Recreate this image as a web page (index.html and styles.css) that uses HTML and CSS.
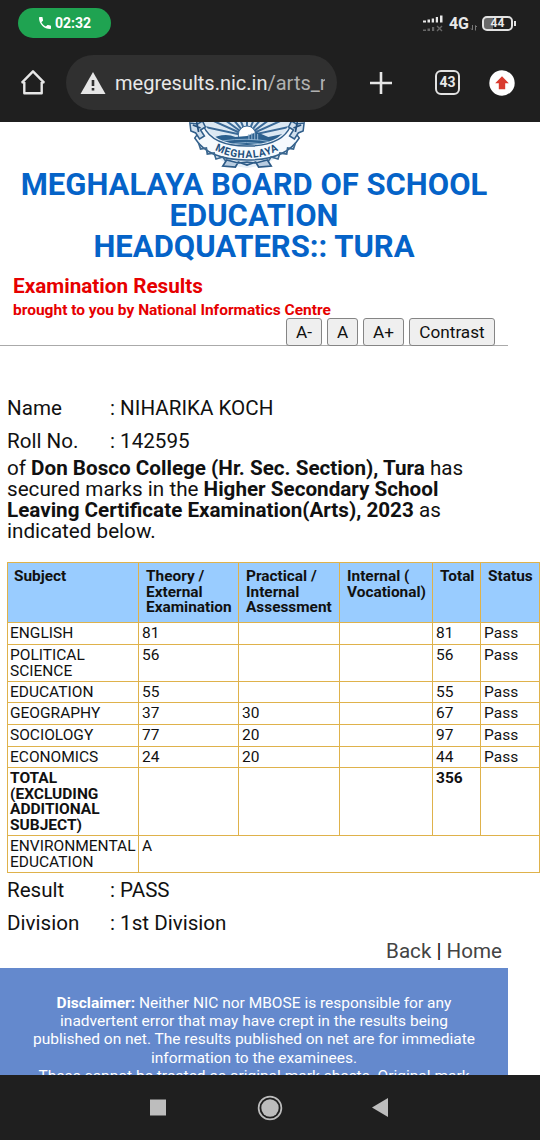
FILE: index.html
```html
<!DOCTYPE html>
<html lang="en">
<head>
<meta charset="utf-8">
<title>Meghalaya Board of School Education</title>
<link rel="stylesheet" href="styles.css">
</head>
<body>
<div class="phone">
  <header class="chrome">
    <div class="status">
      <div class="call">
        <svg width="12" height="12" viewBox="3 3 18 18"><path fill="#fff" d="M6.6 10.8c1.4 2.8 3.8 5.1 6.6 6.6l2.2-2.2c.3-.3.7-.4 1-.2 1.1.4 2.3.6 3.6.6.6 0 1 .4 1 1V20c0 .6-.4 1-1 1C10.600 21 3 13.400 3 4c0-.6.4-1 1-1h3.500c.6 0 1 .4 1 1 0 1.200.2 2.400.6 3.600.1.300 0 .7-.2 1z"/></svg>
        <span>02:32</span>
      </div>
      <div class="signals">
        <svg width="22" height="17" viewBox="0 0 22 17">
          <g fill="#e8e8e8"><path d="M1 5.500h3v2H1zM5.500 4.500h2.500v3H5.500zM9.700 3.500h2.300v4H9.700zM13.800 2h2.200v5.500h-2.200zM18 .5h2.500v7H18z"/></g>
          <g fill="#686868"><path d="M1 14.500h3v1.500H1zM5.500 13.500h2.500V16H5.500zM10 12h2.200v4H10z"/><path d="M15 11l5 5M20 11l-5 5" stroke="#686868" stroke-width="1.400"/></g>
        </svg>
        <span class="network">4G</span>
        <svg class="data" width="8" height="8" viewBox="0 0 8 8"><path d="M2.500 1v5M1 4.500 2.500 6M5.500 6.500v-5M5.500 1.500 7 3" fill="none" stroke="#777" stroke-width="1"/></svg>
        <div class="battery"><span>44</span></div>
      </div>
    </div>
    <div class="toolbar">
      <svg class="home" width="26" height="27" viewBox="0 0 26 27"><path d="M4.300 13v11.200h17.400V13M1.700 13.800 13 2.300l11.300 11.500M1.700 13.300h3M21.300 13.300h3" fill="none" stroke="#e6e6e6" stroke-width="2.400" stroke-linejoin="round"/></svg>
      <div class="address">
        <svg width="26" height="22" viewBox="0 0 26 22"><path d="M13 0 25.500 22H.5z" fill="#e6e6e6"/><path d="M11.700 8h2.600v6h-2.600zM11.700 16h2.600v2.500h-2.600z" fill="#303030"/></svg>
        <span class="url">megresults.nic.in<i>/arts_r</i></span>
      </div>
      <svg class="plus" width="22" height="22" viewBox="0 0 22 22"><path d="M11 0v22M0 11h22" stroke="#e6e6e6" stroke-width="2.600"/></svg>
      <div class="tabs">43</div>
      <svg class="update" width="26" height="26" viewBox="0 0 26 26"><circle cx="13" cy="13" r="12.700" fill="#fff"/><path d="M13 6.200l6.800 7h-3.600v6H9.800v-6H6.200z" fill="#d93a2e"/></svg>
    </div>
  </header>

  <main class="page">
    <div class="crest">
      <svg width="120" height="48" viewBox="0 0 124 48" preserveAspectRatio="none">
        <defs><clipPath id="dome"><path d="M18 0h88Q99 22 62 23 25 22 18 0z"/></clipPath></defs>
        <path d="M5 0h114L108 20 99 32 80 43 62 46 43 43 25 32 14 20z" fill="#e4eef8"/>
        <g clip-path="url(#dome)">
          <path d="M15 0h94v26H15z" fill="#dbe8f3"/>
          <path d="M62 14 16-6M62 14 25-12M62 14 38-14M62 14 50-14M62 14V-14M62 14 74-14M62 14 86-14M62 14 99-12M62 14 108-6M62 14 14 4M62 14 110 4" stroke="#3b6a97" stroke-width="2"/>
          <circle cx="62" cy="13" r="9" fill="#fff" stroke="#3b6a97"/>
          <path d="M22 18Q38 10 50 15L62 14 72 10 84 15 99 12v14H22z" fill="#2c608e"/>
          <path d="M36 19q26-4 52 1M42 22q20-3 38 0" stroke="#8cb0cf" fill="none"/>
          <path d="M64 12v6M67 11v7M70 11v7M73 12v6" stroke="#9ab9d4"/>
        </g>
        <path d="M17 4Q26 24 62 24 98 24 107 4L116 16Q102 38 62 38 22 38 8 16z" fill="#f5f9fd" stroke="#315f8b" stroke-width="1.500"/>
        <path d="M3 1l8 1 5-3 3 6-5 3 4 6-5 3-4-6-5-2zM121 1l-8 1-5-3-3 6 5 3-4 6 5 3 4-6 5-2z" fill="#d0dfed" stroke="#315f8b" stroke-width="1.600"/>
        <path d="M6 3l8 3M10 0l2 10M118 3l-8 3M114 0l-2 10" stroke="#234f7c" stroke-width="1.800"/>
        <path d="M12 21l2 6 6-1 1 6 7-1 2 6 7-2 3 4M112 21l-2 6-6-1-1 6-7-1-2 6-7-2-3 4" fill="none" stroke="#3c6890" stroke-width="1.800"/>
        <path d="M41 38l-4 6 13 1 3-5 9 3 9-3 3 5 13-1-4-6-12 3-9-1-9 1z" fill="#b8cce0" stroke="#2d5b87" stroke-width="1.700"/>
        <path id="arc" d="M14 17Q34 36 62 36 90 36 110 17" fill="none"/>
        <text class="crest-text"><textPath href="#arc" startOffset="50%" text-anchor="middle">MEGHALAYA</textPath></text>
      </svg>
    </div>
    <h1>MEGHALAYA BOARD OF SCHOOL<br>EDUCATION<br>HEADQUATERS:: TURA</h1>
    <section class="intro">
      <h2>Examination Results</h2>
      <p>brought to you by National Informatics Centre</p>
      <div class="tools"><button>A-</button><button>A</button><button>A+</button><button class="wide">Contrast</button></div>
    </section>

    <dl class="facts">
      <dt>Name</dt><dd>: NIHARIKA KOCH</dd>
      <dt>Roll No.</dt><dd>: 142595</dd>
    </dl>
    <p class="summary">of <b>Don Bosco College (Hr. Sec. Section), Tura</b> has<br>secured marks in the <b>Higher Secondary School<br>Leaving Certificate Examination(Arts), 2023</b> as<br>indicated below.</p>

    <table class="marks">
      <colgroup><col class="c1"><col class="c2"><col class="c3"><col class="c4"><col class="c5"><col class="c6"></colgroup>
      <tr class="head"><th>Subject</th><th>Theory /<br>External<br>Examination</th><th>Practical /<br>Internal<br>Assessment</th><th>Internal (<br>Vocational)</th><th>Total</th><th>Status</th></tr>
      <tr class="r1"><td>ENGLISH</td><td>81</td><td></td><td></td><td>81</td><td>Pass</td></tr>
      <tr class="r2"><td>POLITICAL<br>SCIENCE</td><td>56</td><td></td><td></td><td>56</td><td>Pass</td></tr>
      <tr class="r3"><td>EDUCATION</td><td>55</td><td></td><td></td><td>55</td><td>Pass</td></tr>
      <tr class="r1"><td>GEOGRAPHY</td><td>37</td><td>30</td><td></td><td>67</td><td>Pass</td></tr>
      <tr class="r1"><td>SOCIOLOGY</td><td>77</td><td>20</td><td></td><td>97</td><td>Pass</td></tr>
      <tr class="r3"><td>ECONOMICS</td><td>24</td><td>20</td><td></td><td>44</td><td>Pass</td></tr>
      <tr class="total"><td>TOTAL<br>(EXCLUDING<br>ADDITIONAL<br>SUBJECT)</td><td></td><td></td><td></td><td>356</td><td></td></tr>
      <tr class="r2"><td>ENVIRONMENTAL<br>EDUCATION</td><td colspan="5">A</td></tr>
    </table>

    <dl class="facts outcome">
      <dt>Result</dt><dd>: PASS</dd>
      <dt>Division</dt><dd>: 1st Division</dd>
    </dl>
    <nav class="links"><a>Back</a> | <a>Home</a></nav>
    <footer class="disclaimer"><b>Disclaimer:</b> Neither NIC nor MBOSE is responsible for any<br>inadvertent error that may have crept in the results being<br>published on net. The results published on net are for immediate<br>information to the examinees.<br>These cannot be treated as original mark sheets. Original mark</footer>
  </main>

  <div class="navbar">
    <svg width="16" height="17" viewBox="0 0 16 17"><path d="M0 .5h16v16H0z" fill="#bdbdbd"/></svg>
    <svg width="26" height="26" viewBox="0 0 26 26"><circle cx="13" cy="13" r="11.400" fill="none" stroke="#bdbdbd" stroke-width="1.700"/><circle cx="13" cy="13" r="8.700" fill="#bdbdbd"/></svg>
    <svg width="16" height="19" viewBox="0 0 16 19"><path d="M16 0v19L0 9.500z" fill="#bdbdbd"/></svg>
  </div>
</div>
</body>
</html>
```
FILE: styles.css
```css
* { box-sizing: border-box; }
body { margin: 0; font-family: Roboto, "Liberation Sans", sans-serif; color: #111; }
svg { display: block; flex: none; }
.phone { width: 540px; height: 1140px; display: flex; flex-direction: column; overflow: hidden; background: #fff; }

.chrome { flex: none; height: 122px; background: #1f1f1f; color: #e8e8e8; }
.status { display: flex; justify-content: space-between; padding: 8px 27px 0 18px; height: 55px; }
.call { display: flex; align-items: center; gap: 4px; width: 93px; height: 30px; padding-left: 21px; border-radius: 15px; background: #1fa351; color: #fff; font-size: 14px; font-weight: 700; }
.signals { display: flex; align-items: center; height: 31px; }
.network { margin-left: 5px; font-size: 16px; font-weight: 700; }
.data { margin: 8px 4px 0 1px; }
.battery { position: relative; width: 31px; height: 15px; border: 2px solid #e2e2e2; border-radius: 5px; background: linear-gradient(90deg, #696969 35%, #1f1f1f 35%); font-size: 12px; line-height: 11px; font-weight: 700; text-align: center; }
.battery::after { content: ""; position: absolute; right: -5px; top: 3px; width: 2px; height: 5px; background: #e2e2e2; }
.toolbar { display: flex; align-items: center; height: 55px; padding: 0 25px 0 20px; }
.address { display: flex; align-items: center; width: 271px; height: 55px; margin-left: 20px; padding: 0 11px 0 14px; border-radius: 28px; background: #303030; }
.url { width: 210px; margin-left: 9px; overflow: hidden; white-space: nowrap; font-size: 20px; line-height: 28px; }
.url i { font-style: normal; color: #b0b0b0; }
.plus { margin-left: 33px; }
.tabs { width: 25px; height: 25px; margin-left: 43px; border: 2px solid #e2e2e2; border-radius: 6px; font-size: 14px; font-weight: 700; line-height: 21px; text-align: center; }
.update { margin-left: 29px; }

.page { flex: none; height: 953px; overflow: hidden; }
.crest { display: flex; justify-content: center; width: 493px; height: 47px; }
.crest-text { font-size: 10.500px; font-weight: 700; fill: #234f7c; letter-spacing: 0.8px; }
h1 { width: 508px; margin: 0; color: #0563c8; font-size: 31px; line-height: 31px; font-weight: 700; text-align: center; }
.intro { width: 508px; height: 84px; padding: 12px 13px 0; border-bottom: 1px solid #aaa; color: #e60000; }
.intro h2 { margin: 0; font-size: 20.700px; line-height: 25px; font-weight: 700; }
.intro p { margin: 0; font-size: 15.500px; line-height: 23px; font-weight: 700; }
.tools { display: flex; justify-content: flex-end; gap: 5px; margin-top: -4px; }
.tools button { width: 36px; height: 28px; padding: 0; border: 1px solid #858585; border-radius: 3px; background: #efefef; color: #111; font: 17.200px/26px Roboto, sans-serif; }
.tools button:nth-child(2) { width: 31px; }
.tools button:nth-child(3) { width: 41px; }
.tools .wide { width: 86px; }

.facts { display: grid; grid-template-columns: 103px 1fr; grid-auto-rows: 33.500px; align-items: center; margin: 45px 0 0 7px; font-size: 20.600px; }
.facts dd { margin: 0; }
.summary { margin: 0 0 0 7px; font-size: 20.650px; line-height: 21px; }
.marks { width: 533px; margin: 20px 0 0 7px; border-collapse: collapse; table-layout: fixed; font-size: 15.500px; line-height: 15.500px; }
.c1 { width: 131px; }
.c2 { width: 100px; }
.c3 { width: 101px; }
.c4 { width: 93px; }
.c5 { width: 48px; }
.c6 { width: 59px; }
.marks th, .marks td { border: 1px solid #dfb24b; text-align: left; vertical-align: top; white-space: nowrap; }
.marks th { padding: 6px 0 0 7px; background: #99ccff; font-size: 15.400px; font-weight: 700; }
.marks td { padding: 3px 0 0 3px; }
.marks td:first-child { padding-left: 2px; }
.marks th:first-child { padding-left: 6px; }
.head { height: 60px; }
.r1 { height: 22px; }
.r2 { height: 37px; }
.r3 { height: 21px; }
.total { height: 68px; font-weight: 700; }
.outcome { margin-top: 0; }
.links { width: 502px; height: 27px; margin-top: -2px; text-align: right; font-size: 20.600px; line-height: 27px; }
.links a { color: #444; }
.disclaimer { width: 508px; height: 120px; margin-top: 3px; padding-top: 26px; background: #6489cd; color: #fff; font-size: 15.500px; line-height: 18.200px; text-align: center; white-space: nowrap; }
.navbar { flex: none; display: flex; align-items: center; height: 65px; padding-left: 150px; background: #1f1f1f; }
.navbar svg + svg { margin-left: 91px; }
.navbar svg + svg + svg { margin-left: 89px; }
```
